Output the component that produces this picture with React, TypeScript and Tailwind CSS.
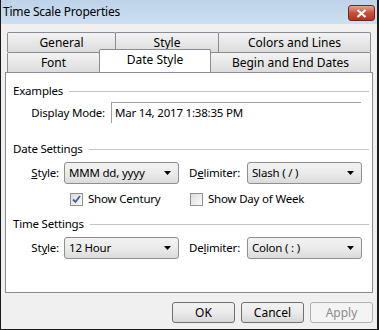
const font = "font-['Segoe_UI','Noto_Sans',sans-serif]";

const Tab = ({ label, w, active = false }: { label: string; w: string; active?: boolean }) => (
  <div
    className={`${w} flex items-center justify-center border border-[#898c95] border-b-0 -ml-px first:ml-0 ${
      active
        ? "bg-white h-[23px] -mt-[2px] relative z-10 rounded-t-[2px]"
        : "h-[20px] bg-gradient-to-b from-[#f3f3f3] to-[#dcdcdc] rounded-t-[2px]"
    }`}
  >
    <span className={active ? "-mt-[2px]" : ""}>{label}</span>
  </div>
);

const Group = ({ title }: { title: string }) => (
  <div className="flex items-center pl-[7px] pr-[3px] h-[16px]">
    <span>{title}</span>
    <div className="flex-1 h-px bg-[#c4c4c4] ml-[6px] mt-[1px]" />
  </div>
);

const Combo = ({ value, w }: { value: string; w: string }) => (
  <div
    className={`${w} h-[22px] flex items-center justify-between pl-[4px] pr-[7px] border border-[#8e8f8f] rounded-[3px] bg-gradient-to-b from-[#f2f2f2] via-[#ebebeb] to-[#dbdbdb]`}
  >
    <span>{value}</span>
    <svg width="7" height="4" viewBox="0 0 7 4">
      <path d="M0 0h7L3.5 4z" fill="#000" />
    </svg>
  </div>
);

const Check = ({ checked, label }: { checked?: boolean; label: string }) => (
  <div className="flex items-center gap-[5px]">
    <div className="w-[13px] h-[13px] border border-[#8f8f8f] bg-gradient-to-br from-[#dcdcdc] to-[#fbfbfb] p-px flex items-center justify-center">
      {checked && (
        <svg width="9" height="9" viewBox="0 0 9 9">
          <path d="M1 4.5L3.5 7L8 1" stroke="#4a5f97" strokeWidth="1.8" fill="none" />
        </svg>
      )}
    </div>
    <span>{label}</span>
  </div>
);

const Btn = ({ label, disabled }: { label: string; disabled?: boolean }) => (
  <div
    className={`w-[63px] h-[21px] flex items-center justify-center rounded-[3px] border ${
      disabled
        ? "border-[#adb2b5] bg-[#f4f4f4] text-[#8b8b8b]"
        : "border-[#707070] bg-gradient-to-b from-[#f2f2f2] via-[#ebebeb] to-[#d8d8d8]"
    }`}
  >
    {label}
  </div>
);

export default function App() {
  return (
    <div className={`${font} text-[11.5px] tracking-[-0.2px] text-black w-[379px] h-[330px] bg-[#f0f0f0] border-l border-r-2 border-b border-[#1a1a1a] flex flex-col`}>
      <div className="h-[24px] shrink-0 flex items-center justify-between pl-[2px] pr-[2px] bg-gradient-to-b from-[#bed3e9] to-[#cddff1]">
        <span className="text-[12px]">Time Scale Properties</span>
        <div className="w-[27px] h-[16px] mt-[2px] rounded-[3px] border border-[#6b2a22] bg-gradient-to-b from-[#e4a394] via-[#c7503a] to-[#b8301c] flex items-center justify-center">
          <svg width="11" height="9" viewBox="0 0 11 9">
            <path d="M1.5 1L9.5 8M9.5 1L1.5 8" stroke="#fff" strokeWidth="2.2" />
          </svg>
        </div>
      </div>

      <div className="px-[4px] pt-[8px]">
        <div className="pl-[2px] text-[12px] tracking-normal">
          <div className="flex h-[20px]">
            <Tab label="General" w="w-[109px]" />
            <Tab label="Style" w="w-[104px]" />
            <Tab label="Colors and Lines" w="w-[153px]" />
          </div>
          <div className="flex h-[20px] items-end">
            <Tab label="Font" w="w-[93px]" />
            <Tab label="Date Style" w="w-[112px]" active />
            <Tab label="Begin and End Dates" w="w-[161px]" />
          </div>
        </div>

        <div className="h-[221px] border border-[#898c95] bg-white pt-[10px] flex flex-col">
          <Group title="Examples" />
          <div className="flex items-center mt-[3px] h-[21px]">
            <span className="w-[105px] text-right pr-[6px]">Display Mode:</span>
            <div className="w-[250px] h-[21px] border-t border-l border-[#a0a0a0] pl-[3px] flex items-center">
              Mar 14, 2017 1:38:35 PM
            </div>
          </div>

          <div className="mt-[18px]">
            <Group title="Date Settings" />
          </div>
          <div className="flex items-center mt-[5px]">
            <span className="w-[58px] text-right pr-[5px]">
              <span className="underline">S</span>tyle:
            </span>
            <Combo value="MMM dd, yyyy" w="w-[115px]" />
            <span className="ml-[10px] w-[58px]">
              D<span className="underline">e</span>limiter:
            </span>
            <Combo value="Slash ( / )" w="w-[115px]" />
          </div>
          <div className="flex items-center mt-[7px] h-[16px]">
            <div className="ml-[64px] w-[120px]">
              <Check checked label="Show Century" />
            </div>
            <Check label="Show Day of Week" />
          </div>

          <div className="mt-[9px]">
            <Group title="Time Settings" />
          </div>
          <div className="flex items-center mt-[5px]">
            <span className="w-[58px] text-right pr-[5px]">
              St<span className="underline">y</span>le:
            </span>
            <Combo value="12 Hour" w="w-[115px]" />
            <span className="ml-[10px] w-[58px]">
              De<span className="underline">l</span>imiter:
            </span>
            <Combo value="Colon ( : )" w="w-[115px]" />
          </div>
        </div>

        <div className="flex justify-end gap-[6px] mt-[9px] text-[12px] tracking-normal">
          <Btn label="OK" />
          <Btn label="Cancel" />
          <Btn label="Apply" disabled />
        </div>
      </div>
    </div>
  );
}
